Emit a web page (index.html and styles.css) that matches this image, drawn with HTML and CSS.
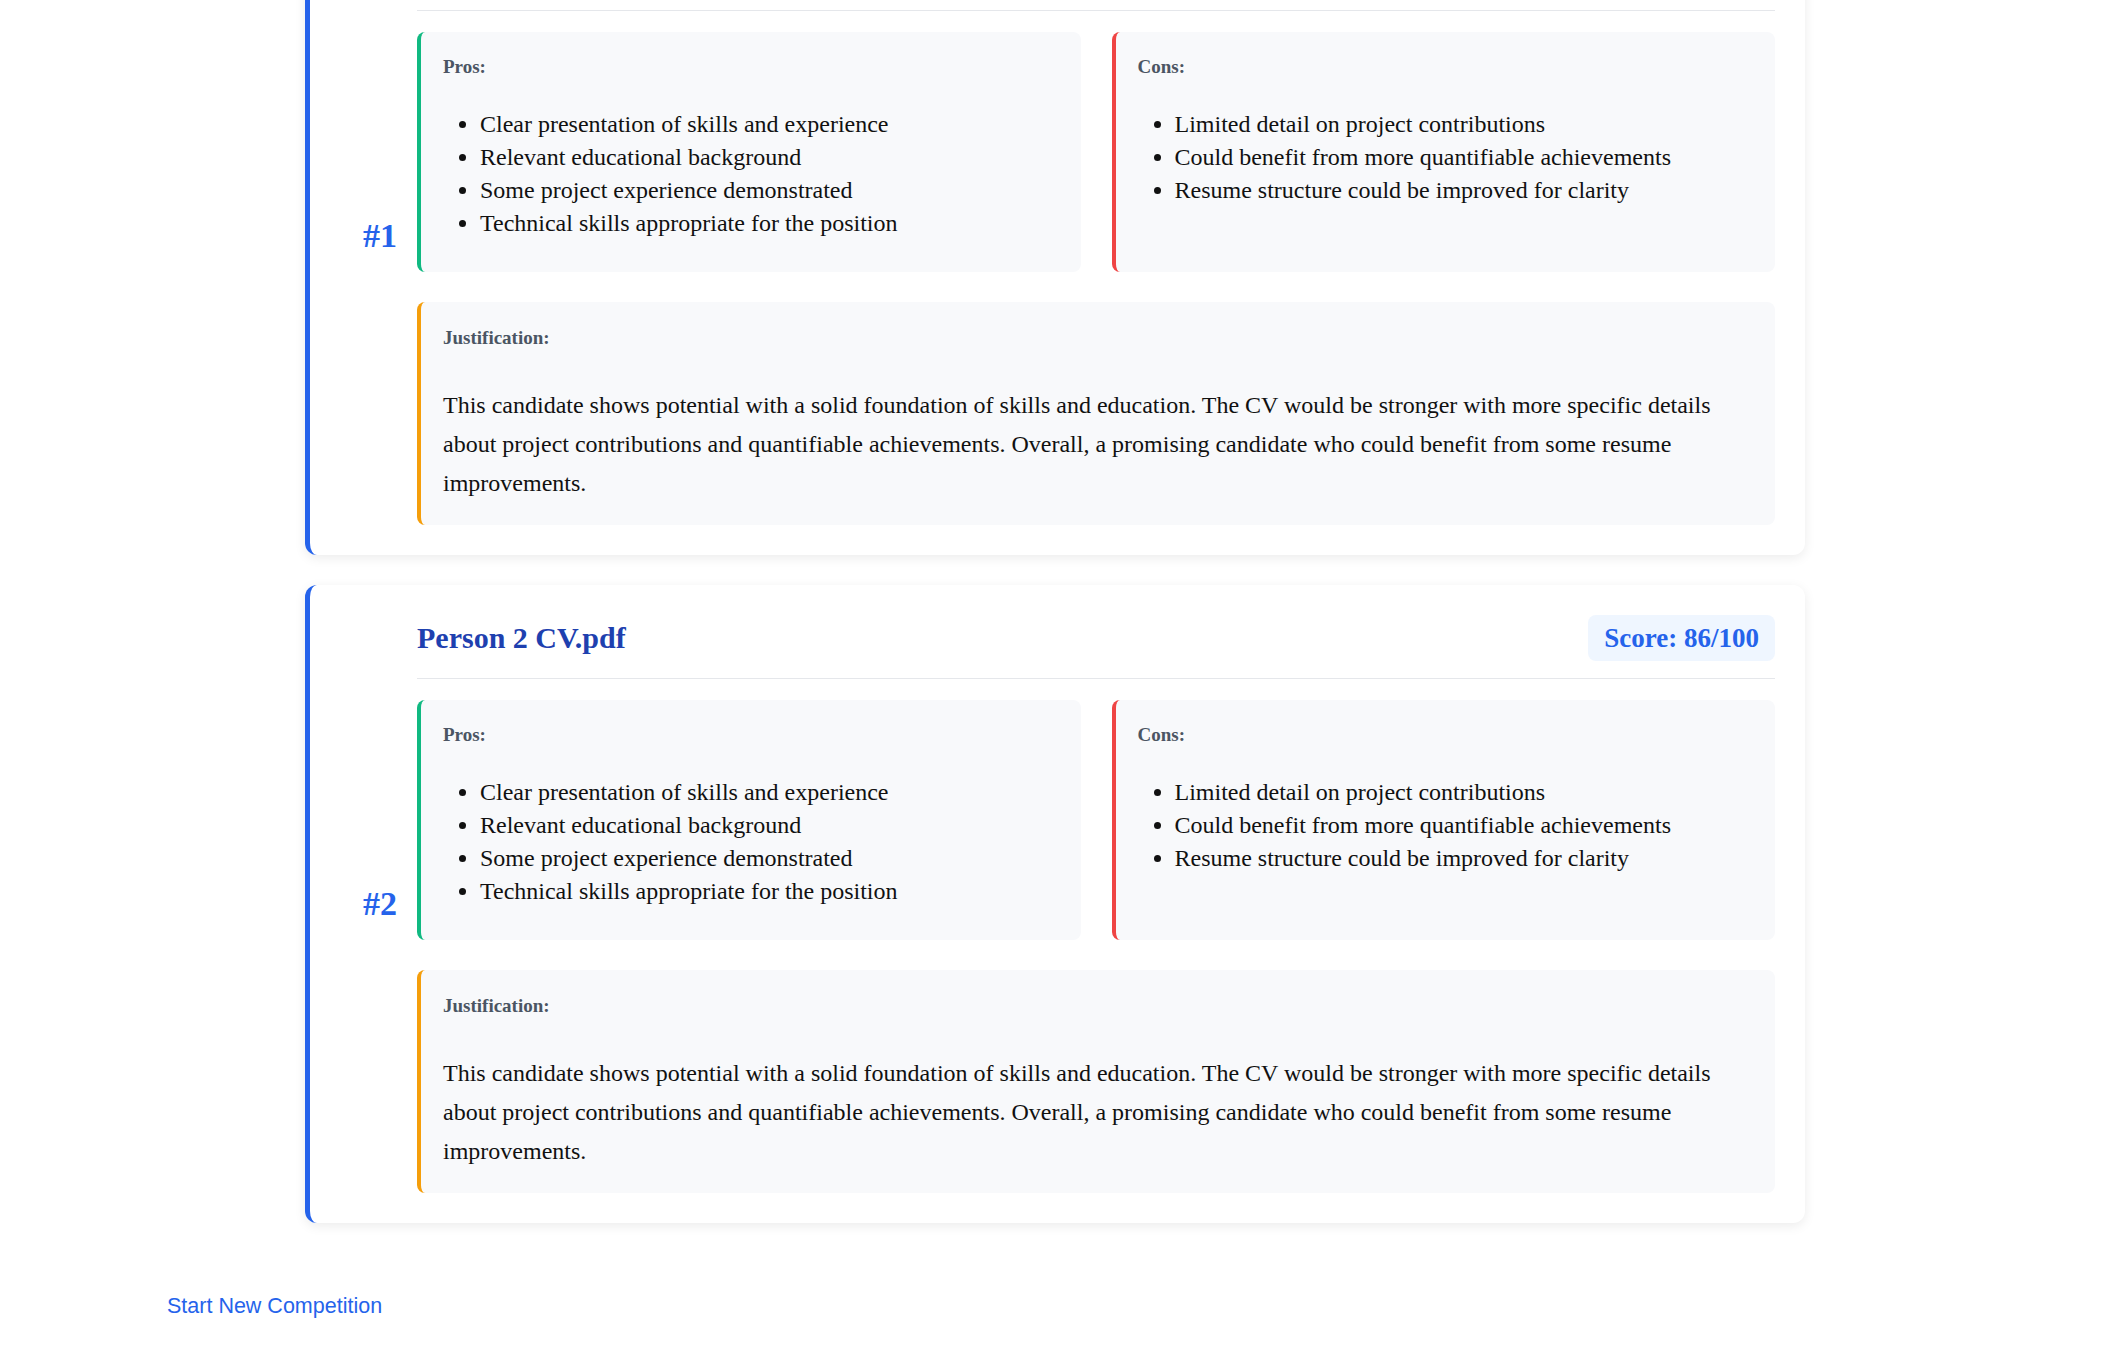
FILE: index.html
```html
<!DOCTYPE html>
<html lang="en">
<head>
<meta charset="utf-8">
<title>Competition Results</title>
<link rel="stylesheet" href="styles.css">
</head>
<body>
<main class="page">
  <div class="results">
    <article class="card">
      <div class="rank">#1</div>
      <div class="card-body">
        <header class="card-header">
          <h3 class="file-name">Person 1 CV.pdf</h3>
          <span class="score">Score: 86/100</span>
        </header>
        <div class="pc-grid">
          <section class="box box-pros">
            <h4 class="box-label">Pros:</h4>
            <ul class="box-list">
              <li>Clear presentation of skills and experience</li>
              <li>Relevant educational background</li>
              <li>Some project experience demonstrated</li>
              <li>Technical skills appropriate for the position</li>
            </ul>
          </section>
          <section class="box box-cons">
            <h4 class="box-label">Cons:</h4>
            <ul class="box-list">
              <li>Limited detail on project contributions</li>
              <li>Could benefit from more quantifiable achievements</li>
              <li>Resume structure could be improved for clarity</li>
            </ul>
          </section>
        </div>
        <section class="box box-just">
          <h4 class="box-label label-just">Justification:</h4>
          <p class="just-text">This candidate shows potential with a solid foundation of skills and education. The CV would be stronger with more specific details about project contributions and quantifiable achievements. Overall, a promising candidate who could benefit from some resume improvements.</p>
        </section>
      </div>
    </article>

    <article class="card">
      <div class="rank">#2</div>
      <div class="card-body">
        <header class="card-header">
          <h3 class="file-name">Person 2 CV.pdf</h3>
          <span class="score">Score: 86/100</span>
        </header>
        <div class="pc-grid">
          <section class="box box-pros">
            <h4 class="box-label">Pros:</h4>
            <ul class="box-list">
              <li>Clear presentation of skills and experience</li>
              <li>Relevant educational background</li>
              <li>Some project experience demonstrated</li>
              <li>Technical skills appropriate for the position</li>
            </ul>
          </section>
          <section class="box box-cons">
            <h4 class="box-label">Cons:</h4>
            <ul class="box-list">
              <li>Limited detail on project contributions</li>
              <li>Could benefit from more quantifiable achievements</li>
              <li>Resume structure could be improved for clarity</li>
            </ul>
          </section>
        </div>
        <section class="box box-just">
          <h4 class="box-label label-just">Justification:</h4>
          <p class="just-text">This candidate shows potential with a solid foundation of skills and education. The CV would be stronger with more specific details about project contributions and quantifiable achievements. Overall, a promising candidate who could benefit from some resume improvements.</p>
        </section>
      </div>
    </article>
  </div>

  <div class="actions">
    <button class="new-btn" type="button">Start New Competition</button>
  </div>
</main>
</body>
</html>
```

FILE: styles.css
```css
html, body {
  margin: 0;
  padding: 0;
  background: #ffffff;
}

body {
  font-family: "Liberation Serif", "Times New Roman", serif;
  color: #111111;
  overflow: hidden;
}

.page {
  margin-top: -83px;
  padding: 0 158px 0 167px;
}

.results {
  max-width: 1500px;
  margin: 0 auto;
  display: flex;
  flex-direction: column;
  gap: 30px;
}

.card {
  display: flex;
  align-items: center;
  gap: 20px;
  background: #ffffff;
  border-left: 5px solid #2563eb;
  border-radius: 12px;
  box-shadow: 0 3px 12px rgba(0, 0, 0, 0.08);
  padding: 30px 30px 30px 30px;
}

.rank {
  width: 57px;
  flex: none;
  text-align: right;
  font-size: 34px;
  font-weight: bold;
  color: #2563eb;
}

.card-body {
  flex: 1;
  min-width: 0;
}

.card-header {
  display: flex;
  align-items: center;
  justify-content: space-between;
  padding-bottom: 17px;
  border-bottom: 1px solid #e5e7eb;
  margin-bottom: 21px;
}

.file-name {
  margin: 0;
  font-size: 30px;
  font-weight: bold;
  color: #1e40af;
}

.score {
  font-size: 27px;
  font-weight: bold;
  color: #2563eb;
  background: #eff6ff;
  padding: 7px 16px;
  border-radius: 8px;
  line-height: 32px;
}

.pc-grid {
  display: grid;
  grid-template-columns: 1fr 1fr;
  gap: 31px;
  margin-bottom: 30px;
}

.box {
  background: #f8f9fb;
  border-left: 4px solid #10b981;
  border-radius: 8px;
  padding: 24px 22px 22px 22px;
}

.box-cons {
  border-left-color: #ef4444;
}

.box-just {
  border-left-color: #f59e0b;
  padding-top: 25px;
}

.box-label {
  margin: 0 0 30px;
  font-size: 19px;
  line-height: 22px;
  font-weight: bold;
  color: #4b5563;
}

.label-just {
  margin-bottom: 37px;
}

.box-list {
  margin: 0 0 10px;
  padding-left: 37px;
  font-size: 24px;
  line-height: 33px;
}

.just-text {
  margin: 0;
  font-size: 24px;
  line-height: 39px;
}

.actions {
  padding-top: 71px;
}

.new-btn {
  font-family: "Liberation Sans", Arial, sans-serif;
  font-size: 21.5px;
  line-height: 24px;
  color: #2563eb;
  background: none;
  border: none;
  padding: 0;
  cursor: pointer;
}
```
